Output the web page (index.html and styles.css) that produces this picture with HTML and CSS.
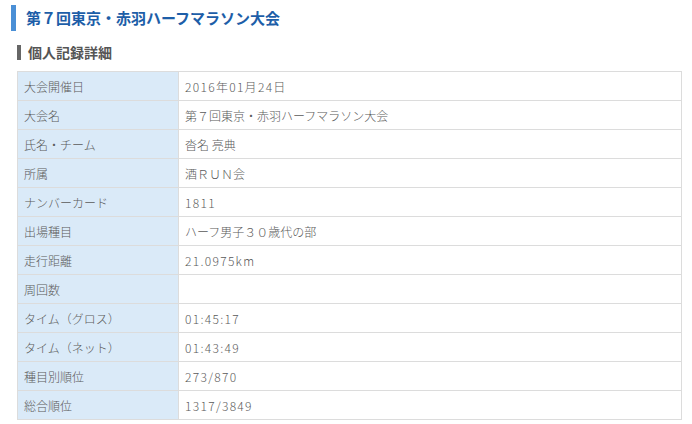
FILE: index.html
```html
<!DOCTYPE html>
<html lang="ja">
<head>
<meta charset="utf-8">
<link rel="stylesheet" href="styles.css">
</head>
<body>
<div class="page">
  <h1 class="title">第７回東京・赤羽ハーフマラソン大会</h1>
  <h2 class="subtitle">個人記録詳細</h2>
  <table class="record">
    <tr><th>大会開催日</th><td class="num">2016年01月24日</td></tr>
    <tr><th>大会名</th><td>第７回東京・赤羽ハーフマラソン大会</td></tr>
    <tr><th>氏名・チーム</th><td>沓名 亮典</td></tr>
    <tr><th>所属</th><td>酒ＲＵＮ会</td></tr>
    <tr><th>ナンバーカード</th><td class="num">1811</td></tr>
    <tr><th>出場種目</th><td>ハーフ男子３０歳代の部</td></tr>
    <tr><th>走行距離</th><td class="num">21.0975km</td></tr>
    <tr><th>周回数</th><td></td></tr>
    <tr><th>タイム（グロス）</th><td class="num">01:45:17</td></tr>
    <tr><th>タイム（ネット）</th><td class="num">01:43:49</td></tr>
    <tr><th>種目別順位</th><td class="num">273/870</td></tr>
    <tr><th>総合順位</th><td class="num">1317/3849</td></tr>
  </table>
</div>
</body>
</html>
```
FILE: styles.css
```css
html, body {
  margin: 0;
  padding: 0;
  background: #fff;
}
body {
  font-family: "Noto Sans CJK JP", "Noto Sans", sans-serif;
  color: #555;
}
.page {
  padding: 5px 11px 0 11px;
}
.title {
  margin: 0;
  height: 26px;
  border-left: 5px solid #4a8fd6;
  padding-left: 10px;
  font-size: 15px;
  line-height: 26px;
  font-weight: bold;
  color: #1d5ea8;
}
.subtitle {
  margin: 14px 0 0 6px;
  height: 15px;
  border-left: 4px solid #666;
  padding-left: 7px;
  font-size: 14px;
  line-height: 15px;
  font-weight: bold;
  color: #555;
}
.record {
  margin: 11px 0 0 6px;
  width: 665px;
  border-collapse: collapse;
  font-size: 12px;
}
.record th, .record td {
  border: 1px solid #dcdcdc;
  height: 28px;
  padding: 0 0 0 6px;
  text-align: left;
  font-weight: 300;
  color: #5a5a5a;
}
.record th {
  width: 154px;
  background: #daeaf8;
}
.record td.num {
  letter-spacing: 1.3px;
}
```
